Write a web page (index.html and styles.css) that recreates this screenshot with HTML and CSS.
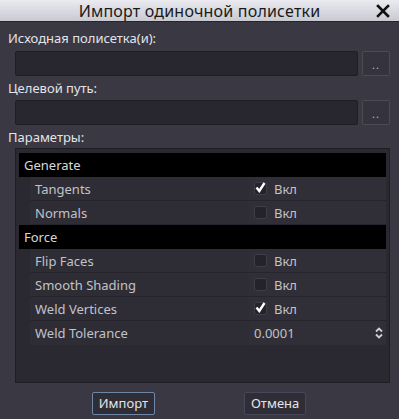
FILE: index.html
```html
<!DOCTYPE html>
<html>
<head>
<meta charset="utf-8">
<link rel="stylesheet" href="styles.css">
</head>
<body>
<div class="dialog">
  <div class="titlebar">
    <span class="title">Импорт одиночной полисетки</span>
    <svg class="close" width="14" height="14" viewBox="0 0 14 14"><path d="M2 2 L12 12 M12 2 L2 12" stroke="#111" stroke-width="2.6" stroke-linecap="square"/></svg>
  </div>
  <div class="content">
    <div class="label first">Исходная полисетка(и):</div>
    <div class="field-row">
      <div class="lineedit"></div>
      <div class="dots">..</div>
    </div>
    <div class="label">Целевой путь:</div>
    <div class="field-row">
      <div class="lineedit"></div>
      <div class="dots">..</div>
    </div>
    <div class="label">Параметры:</div>
    <div class="tree">
      <div class="cat">Generate</div>
      <div class="row"><div class="name">Tangents</div><div class="val"><span class="cb on"><svg width="11" height="11" viewBox="0 0 11 11"><path d="M1.5 5.5 L4.3 9 L9.5 1" stroke="#fff" stroke-width="2.4" fill="none"/></svg></span>Вкл</div></div>
      <div class="row"><div class="name">Normals</div><div class="val"><span class="cb"></span>Вкл</div></div>
      <div class="cat">Force</div>
      <div class="row"><div class="name">Flip Faces</div><div class="val"><span class="cb"></span>Вкл</div></div>
      <div class="row"><div class="name">Smooth Shading</div><div class="val"><span class="cb"></span>Вкл</div></div>
      <div class="row"><div class="name">Weld Vertices</div><div class="val"><span class="cb on"><svg width="11" height="11" viewBox="0 0 11 11"><path d="M1.5 5.5 L4.3 9 L9.5 1" stroke="#fff" stroke-width="2.4" fill="none"/></svg></span>Вкл</div></div>
      <div class="row last"><div class="name">Weld Tolerance</div><div class="val num">0.0001<svg class="spin" width="8" height="12" viewBox="0 0 8 12"><path d="M1 4.5 L4 1.5 L7 4.5 M1 7.5 L4 10.5 L7 7.5" stroke="#d0d0d0" stroke-width="1.8" fill="none"/></svg></div></div>
    </div>
    <div class="buttons">
      <div class="btn focus">Импорт</div>
      <div class="btn">Отмена</div>
    </div>
  </div>
</div>
</body>
</html>
```

FILE: styles.css
```css
html, body {
  margin: 0;
  padding: 0;
  background: #393843;
}
body {
  width: 399px;
  height: 419px;
  overflow: hidden;
  font-family: "Noto Sans", "DejaVu Sans", sans-serif;
}
.dialog {
  width: 399px;
  height: 419px;
  display: flex;
  flex-direction: column;
  background: #393843;
}
.titlebar {
  height: 21px;
  background: linear-gradient(#eaeaf0, #c9c9d2);
  display: flex;
  align-items: center;
  justify-content: center;
  position: relative;
  border-bottom: 1px solid #26252d;
}
.title {
  font-size: 16px;
  color: #1a1a1a;
  letter-spacing: 0.2px;
  margin-left: 0;
}
.close {
  position: absolute;
  right: 9px;
  top: 4px;
}
.content {
  padding: 5px 9px 0 8px;
  display: flex;
  flex-direction: column;
}
.label {
  font-size: 13px;
  color: #e4e4e8;
  height: 24px;
  line-height: 24px;
}
.label.first {
  line-height: 22px;
}
.field-row {
  display: flex;
  margin-left: 7px;
  gap: 4px;
  height: 25px;
}
.lineedit {
  flex: 1;
  background: #28272f;
  border: 1px solid #1f1e25;
  border-radius: 2px;
}
.dots {
  width: 26px;
  background: #35343e;
  border: 1px solid #4b4a55;
  border-radius: 2px;
  color: #b8b8c0;
  font-size: 11px;
  text-align: center;
  line-height: 26px;
  letter-spacing: 1px;
}
.tree {
  margin-left: 7px;
  margin-top: -1px;
  height: 235px;
  box-sizing: border-box;
  background: #2a2931;
  border: 1px solid #1f1e25;
  padding: 4px 3px 0;
  display: flex;
  flex-direction: column;
}
.cat {
  height: 24px;
  line-height: 24px;
  background: #000;
  color: #d8d8d8;
  font-size: 13px;
  padding-left: 5px;
  flex: none;
}
.row {
  height: 24px;
  flex: none;
  display: flex;
  margin-left: 11px;
  font-size: 13px;
  color: #c2c2c7;
}
.row .name {
  width: 219px;
  background: #2e2d36;
  border-bottom: 1px solid #26252d;
  line-height: 24px;
  padding-left: 5px;
  box-sizing: border-box;
}
.row .val {
  flex: 1;
  background: #302f38;
  border-bottom: 1px solid #26252d;
  display: flex;
  align-items: center;
  padding-left: 5px;
  line-height: 24px;
}
.row.last .name, .row.last .val {
  border-bottom: none;
}
.cb {
  width: 13px;
  height: 13px;
  box-sizing: border-box;
  background: #24232b;
  border: 1px solid #3f3e48;
  border-radius: 2px;
  margin-right: 7px;
  display: inline-flex;
  align-items: center;
  justify-content: center;
}
.cb svg {
  margin-top: -2px;
}
.num {
  justify-content: space-between;
  padding-right: 3px;
}
.buttons {
  display: flex;
  justify-content: center;
  gap: 89px;
  margin-top: 9px;
}
.btn {
  height: 21px;
  line-height: 21px;
  padding: 0 6px;
  font-size: 13px;
  color: #e4e4e8;
  background: #2f2e37;
  border: 1px solid #48475a;
  border-radius: 2px;
}
.btn.focus {
  border-color: #6e87a6;
}
```
